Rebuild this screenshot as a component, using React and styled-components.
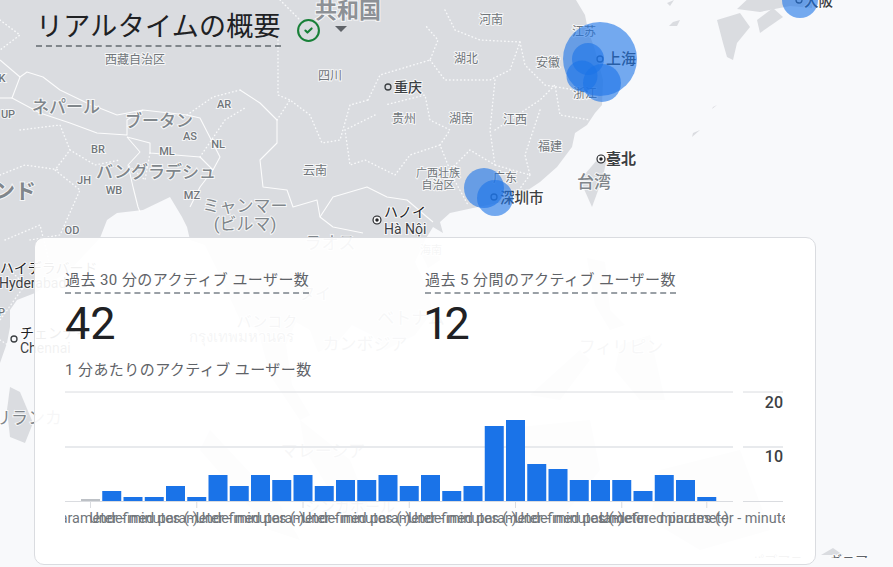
import React from 'react';
import styled, { createGlobalStyle } from 'styled-components';
import { CircleCheck } from 'lucide-react';

const GlobalStyle = createGlobalStyle`
  html, body {
    margin: 0;
    padding: 0;
    background: #f8f9fb;
  }
`;

const FONT = `Roboto, "Noto Sans CJK JP", "Noto Sans", sans-serif`;

const Page = styled.div`
  position: relative;
  width: 893px;
  height: 567px;
  overflow: hidden;
  background: #f8f9fb;
  font-family: ${FONT};
`;

const MapCanvas = styled.svg`
  position: absolute;
  left: 0;
  top: 0;
  font-family: ${FONT};
`;

const Land = styled.path`
  fill: #dadce0;
`;

const Border = styled.path`
  fill: none;
  stroke: #fff;
  stroke-opacity: 0.9;
  stroke-width: 1.1;
  stroke-linejoin: round;
`;

const Province = styled.path`
  fill: none;
  stroke: #f8f9fa;
  stroke-width: 1.4;
  stroke-linecap: round;
  stroke-dasharray: 0.5 3.2;
`;

const Bubble = styled.circle`
  fill: #1a73e8;
  fill-opacity: 0.6;
`;

const Pin = styled.circle`
  fill: ${(p) => (p.$capital ? '#202124' : 'none')};
  stroke: ${(p) => (p.$capital ? '#fff' : '#3c4043')};
  stroke-width: 1.3;
`;

const PinRing = styled.circle`
  fill: none;
  stroke: #202124;
  stroke-width: 1.1;
`;

const Place = styled.text`
  fill: ${(p) => p.$color || '#70757a'};
  font-size: ${(p) => p.$size || 12}px;
  font-weight: ${(p) => p.$weight || 400};
  text-anchor: ${(p) => p.$anchor || 'middle'};
  dominant-baseline: central;
  paint-order: stroke;
  stroke: rgba(255, 255, 255, 0.75);
  stroke-width: 2px;
`;

const Content = styled.div`
  position: relative;
  display: flex;
  flex-direction: column;
  align-items: flex-start;
`;

const TitleRow = styled.div`
  display: flex;
  align-items: center;
  height: 47px;
  margin-left: 36px;
`;

const Title = styled.h1`
  margin: 0;
  padding: 9px 0 0;
  height: 36px;
  box-sizing: content-box;
  font-size: 27px;
  line-height: 36px;
  font-weight: 400;
  letter-spacing: 0.3px;
  color: #202124;
  border-bottom: 2px dashed #80868b;
  white-space: nowrap;
`;

const StatusIcon = styled(CircleCheck)`
  margin-left: 15px;
  margin-top: 13px;
  color: #188038;
`;

const Caret = styled.span`
  width: 0;
  height: 0;
  margin-left: 14px;
  margin-top: 11px;
  border-left: 6px solid transparent;
  border-right: 6px solid transparent;
  border-top: 6px solid #5f6368;
`;

const Card = styled.section`
  box-sizing: border-box;
  width: 782px;
  height: 328px;
  margin: 190px 0 0 34px;
  padding: 32px 0 0 30px;
  background: rgba(255, 255, 255, 0.93);
  border: 1px solid #dadce0;
  border-radius: 10px;
`;

const Metrics = styled.div`
  display: grid;
  grid-template-columns: 360px 360px;
`;

const Metric = styled.div`
  display: flex;
  flex-direction: column;
  align-items: flex-start;
`;

const MetricLabel = styled.span`
  height: 22px;
  font-size: 15px;
  line-height: 20px;
  font-weight: 400;
  letter-spacing: 0.43px;
  color: #5f6368;
  white-space: nowrap;
  border-bottom: 2px dashed #9aa0a6;
`;

const MetricValue = styled.div`
  margin-top: 4px;
  font-size: 45px;
  line-height: 52px;
  font-weight: 400;
  font-feature-settings: 'pnum';
  font-variant-numeric: proportional-nums;
  color: #202124;
`;

const ChartTitle = styled.div`
  margin-top: 10px;
  font-size: 15px;
  line-height: 20px;
  font-weight: 400;
  letter-spacing: 0.43px;
  color: #5f6368;
  white-space: nowrap;
`;

const Chart = styled.svg`
  display: block;
  margin-top: 11px;
  font-family: ${FONT};
`;

const GridLine = styled.line`
  stroke: ${(p) => (p.$soft ? '#e8eaed' : '#dadce0')};
  stroke-width: ${(p) => (p.$soft ? 2 : 1)};
`;

const Bar = styled.rect`
  fill: ${(p) => (p.$muted ? '#bdc1c6' : '#1a73e8')};
`;

const AxisValue = styled.text`
  fill: #3c4043;
  font-size: 16px;
  font-weight: 500;
  text-anchor: end;
`;

const AxisLabel = styled.text`
  fill: #70757a;
  font-size: 14.4px;
  text-anchor: middle;
`;

const LAND = [
  'M-5 -5 L573 -5 L585 15 L588 30 L595 50 L603 80 L602 105 L595 113 L587 125 L575 133 L572 147 L557 167 L540 182 L513 200 L473 208 L450 213 L440 222 L443 233 L433 227 L425 240 L415 262 L428 290 L432 312 L415 335 L385 350 L372 335 L352 325 L335 345 L318 352 L310 330 L296 322 L286 345 L292 385 L310 415 L300 420 L270 375 L258 330 L240 320 L222 280 L205 245 L190 240 L187 227 L182 217 L170 197 L143 210 L117 213 L107 220 L100 238 L70 270 L35 293 L17 300 L10 310 L10 327 L7 343 L0 363 L-5 370 Z',
  'M10 387 L20 392 L33 423 L25 443 L10 437 L7 410 Z',
  'M597 160 L607 157 L603 177 L592 207 L580 180 Z',
  'M717 20 L740 13 L750 27 L737 43 L733 60 L727 57 L723 43 Z',
  'M757 20 L773 8 L783 17 L760 33 Z',
  'M737 9 L752 -5 L812 -5 L812 8 L790 6 L760 12 Z',
  'M673 22 L680 20 L677 26 L669 26 Z',
  'M713 107 L717 105 L712 109 Z',
  'M693 133 L700 130 L692 137 Z',
  'M667 3 L674 0 L670 6 Z',
  'M422 255 L438 248 L440 260 L428 268 Z',
  'M587 258 L605 262 L610 310 L625 325 L610 330 L595 305 Z',
  'M620 345 L650 335 L665 400 L640 400 L615 370 Z',
  'M530 395 L580 350 L590 360 L560 400 Z',
  'M300 420 L350 460 L370 510 L345 515 L305 450 Z',
  'M490 430 L590 420 L600 470 L560 520 L480 510 Z',
  'M210 430 L280 505 L300 540 L270 530 L200 450 Z',
  'M660 470 L740 450 L770 530 L700 550 L650 520 Z',
  'M821 555 L833 548 L843 555 Z',
];

const BORDERS = [
  'M0 60 L20 77 L27 72 L43 77 L60 90 L87 103 L117 115 L143 110 L187 115',
  'M20 77 L12 98 L40 113 L70 123 L97 133 L127 135 L127 120 L143 110',
  'M127 137 L150 143 L150 153 L200 157 L213 170 L200 187 L190 207',
  'M133 187 L138 207 L140 212',
  'M127 137 L140 152 L128 165 L133 187',
  'M187 115 L200 118 L220 157 L213 170',
  'M240 90 L260 103 L277 120 L277 143 L260 160 L263 187 L287 190 L293 207 L317 200 L320 217 L333 227 L363 233',
  'M320 217 L333 197 L367 187 L387 197 L407 200 L427 217 L433 222',
  'M0 98 L12 98',
];

const PROVINCES = [
  'M187 115 L213 97 L240 90',
  'M277 120 L290 100 L310 115 L322 143 L340 140 L350 105 L368 100',
  'M278 40 L278 95 L290 100',
  'M368 100 L380 75 L430 60 L438 40 L425 25',
  'M375 115 L345 130 L350 165 L365 160 L395 175 L410 155 L440 145',
  'M440 145 L450 130 L430 120 L425 95 L385 105',
  'M445 10 L455 30 L480 40 L520 42 L510 70 L490 80 L445 80 L430 60',
  'M520 42 L525 65 L545 85 L575 90',
  'M495 80 L490 130 L495 165 L470 150 L450 170 L440 145',
  'M495 130 L540 100 L555 85 L560 115 L590 120',
  'M540 110 L525 155 L530 175 L495 165',
  'M530 175 L515 195',
  'M430 170 L450 172 L468 205',
  'M20 130 L60 125 L70 150 L55 170 L80 190 L60 235 L30 240',
  'M70 150 L95 165 L120 160',
  'M150 153 L145 180 L128 165',
  'M200 157 L225 120 L245 108',
  'M0 175 L25 165 L60 170',
  'M5 240 L40 225 L50 265',
  'M5 265 L25 285 L0 320',
  'M0 340 L8 345 L4 380',
  'M280 0 L300 20',
  'M0 20 L20 35 L0 50',
];

const PLACES = [
  { t: '共和国', x: 348, y: 10, size: 22, weight: 700, color: '#8d9196' },
  { t: '西藏自治区', x: 135, y: 60 },
  { t: '四川', x: 330, y: 76 },
  { t: '重庆', x: 394, y: 87, size: 14, weight: 500, anchor: 'start', color: '#3c4043' },
  { t: '贵州', x: 404, y: 119 },
  { t: 'ネパール', x: 66, y: 107, size: 17, weight: 500, color: '#80868b' },
  { t: 'ブータン', x: 159, y: 121, size: 17, weight: 500, color: '#80868b' },
  { t: 'バングラデシュ', x: 156, y: 172, size: 17, weight: 500, color: '#80868b' },
  { t: 'インド', x: 36, y: 191, size: 21, weight: 700, anchor: 'end', color: '#80868b' },
  { t: 'ミャンマー', x: 245, y: 206, size: 17, color: '#80868b' },
  { t: '(ビルマ)', x: 245, y: 224, size: 17, color: '#80868b' },
  { t: 'AR', x: 224, y: 104, size: 11, weight: 500 },
  { t: 'UP', x: 8, y: 114, size: 11, weight: 500 },
  { t: 'K', x: 2, y: 78, size: 11, weight: 500 },
  { t: 'AS', x: 190, y: 136, size: 11, weight: 500 },
  { t: 'NL', x: 218, y: 144, size: 11, weight: 500 },
  { t: 'BR', x: 98, y: 149, size: 11, weight: 500 },
  { t: 'ML', x: 167, y: 151, size: 11, weight: 500 },
  { t: 'JH', x: 84, y: 180, size: 11, weight: 500 },
  { t: 'WB', x: 114, y: 190, size: 11, weight: 500 },
  { t: 'MZ', x: 192, y: 195, size: 11, weight: 500 },
  { t: 'OD', x: 72, y: 230, size: 11, weight: 500 },
  { t: '云南', x: 315, y: 171 },
  { t: 'ハノイ', x: 384, y: 212, size: 14, anchor: 'start', color: '#202124' },
  { t: 'Hà Nội', x: 384, y: 229, size: 14, anchor: 'start', color: '#3c4043' },
  { t: 'ラオス', x: 330, y: 243, size: 17, color: '#80868b' },
  { t: '广西壮族', x: 438, y: 173, size: 11 },
  { t: '自治区', x: 438, y: 185, size: 11 },
  { t: '河南', x: 491, y: 20 },
  { t: '湖北', x: 466, y: 59 },
  { t: '安徽', x: 548, y: 63 },
  { t: '江苏', x: 584, y: 32 },
  { t: '上海', x: 606, y: 59, size: 15, weight: 500, anchor: 'start', color: '#3c4043' },
  { t: '浙江', x: 585, y: 94 },
  { t: '湖南', x: 461, y: 119 },
  { t: '江西', x: 515, y: 120 },
  { t: '福建', x: 550, y: 147 },
  { t: '广东', x: 505, y: 178 },
  { t: '深圳市', x: 500, y: 198, size: 14.5, weight: 500, anchor: 'start', color: '#3c4043' },
  { t: '臺北', x: 606, y: 159, size: 15, weight: 700, anchor: 'start', color: '#3c4043' },
  { t: '台湾', x: 594, y: 182, size: 17, weight: 500, color: '#80868b' },
  { t: '大阪', x: 804, y: 1, size: 14.5, weight: 500, anchor: 'start', color: '#3c4043' },
  { t: 'ハイデラバード', x: 0, y: 268, size: 14, anchor: 'start', color: '#202124' },
  { t: 'Hyderabad', x: -1, y: 283, size: 14, anchor: 'start', color: '#3c4043' },
  { t: 'AP', x: 5, y: 312, size: 11, weight: 500, anchor: 'end' },
  { t: 'チェンナイ', x: 20, y: 333, size: 14, anchor: 'start', color: '#202124' },
  { t: 'Chennai', x: 20, y: 348, size: 14, anchor: 'start', color: '#3c4043' },
  { t: 'スリランカ', x: 62, y: 418, size: 17, anchor: 'end', color: '#80868b' },
  { t: 'バンコク', x: 267, y: 322, size: 15, color: '#70757a' },
  { t: 'กรุงเทพมหานคร', x: 241, y: 337, size: 15, color: '#70757a' },
  { t: 'タイ', x: 315, y: 293, size: 16, color: '#80868b' },
  { t: 'ベトナム', x: 411, y: 318, size: 17, color: '#80868b' },
  { t: 'カンボジア', x: 365, y: 344, size: 17, color: '#80868b' },
  { t: 'フィリピン', x: 621, y: 347, size: 17, color: '#80868b' },
  { t: 'マレーシア', x: 323, y: 451, size: 17, color: '#80868b' },
  { t: 'シンガポール', x: 350, y: 507, size: 15, color: '#80868b' },
  { t: '海南', x: 431, y: 250, size: 11 },
  { t: 'パプアニューギニア', x: 868, y: 560, size: 13, anchor: 'end', color: '#5f6368' },
];

const BUBBLES = [
  [600, 59, 37],
  [588, 59, 16],
  [582, 76, 15.5],
  [602, 83, 19],
  [484, 188, 20],
  [495, 198, 18],
  [800, 0, 18],
];

const PINS = [
  [388, 87],
  [600, 59],
  [494, 197],
  [799, 0],
  [14, 339],
];

const CAPITALS = [
  [377, 220],
  [601, 159],
];

const USERS_PER_MINUTE = [
  2, 10, 4, 4, 15, 4, 26, 15, 26, 21, 26, 15, 21, 21, 26, 15, 26, 10, 15, 75, 81, 37, 32, 21, 21, 21,
  10, 26, 21, 4,
];

const TICKS = [0, 5, 10, 15, 20, 25, 29];
const BAR_START = 16;
const BAR_STEP = 21.25;
const BAR_WIDTH = 19;
const BASELINE = 110;

const tickX = (i) => BAR_START + i * BAR_STEP + BAR_WIDTH / 2;

function WorldMap() {
  return (
    <MapCanvas width="893" height="558" viewBox="0 0 893 558">
      {LAND.map((d) => (
        <Land key={d} d={d} />
      ))}
      {PROVINCES.map((d) => (
        <Province key={d} d={d} />
      ))}
      {BORDERS.map((d) => (
        <Border key={d} d={d} />
      ))}
      {PLACES.map((p) => (
        <Place
          key={p.t}
          x={p.x}
          y={p.y}
          $size={p.size}
          $weight={p.weight}
          $color={p.color}
          $anchor={p.anchor}
        >
          {p.t}
        </Place>
      ))}
      {PINS.map(([x, y]) => (
        <Pin key={x} cx={x} cy={y} r="3" />
      ))}
      {CAPITALS.map(([x, y]) => (
        <g key={x}>
          <PinRing cx={x} cy={y} r="4" />
          <Pin $capital cx={x} cy={y} r="2.4" />
        </g>
      ))}
      {BUBBLES.map(([x, y, r]) => (
        <Bubble key={`${x}-${y}`} cx={x} cy={y} r={r} />
      ))}
    </MapCanvas>
  );
}

function UsersChart() {
  return (
    <Chart width="720" height="140" viewBox="0 0 720 140">
      <GridLine x1="0" x2="668" y1="1" y2="1" />
      <GridLine x1="678" x2="718" y1="1" y2="1" />
      <GridLine $soft x1="0" x2="668" y1="56" y2="56" />
      <GridLine $soft x1="678" x2="718" y1="56" y2="56" />
      <GridLine x1="0" x2="668" y1={BASELINE + 0.5} y2={BASELINE + 0.5} />
      <GridLine x1="678" x2="718" y1={BASELINE + 0.5} y2={BASELINE + 0.5} />
      {USERS_PER_MINUTE.map((h, i) => (
        <Bar
          key={i}
          $muted={i === 0}
          x={BAR_START + i * BAR_STEP}
          y={BASELINE - h}
          width={BAR_WIDTH}
          height={h}
        />
      ))}
      {TICKS.map((i) => (
        <g key={i}>
          <GridLine x1={tickX(i)} x2={tickX(i)} y1={BASELINE} y2={BASELINE + 7} />
          <AxisLabel x={tickX(i)} y={BASELINE + 22}>
            Undefined parameter - minutes (-)
          </AxisLabel>
        </g>
      ))}
      <AxisValue x="718" y="17">
        20
      </AxisValue>
      <AxisValue x="718" y="71">
        10
      </AxisValue>
    </Chart>
  );
}

export default function App() {
  return (
    <Page>
      <GlobalStyle />
      <WorldMap />
      <Content>
        <TitleRow>
          <Title>リアルタイムの概要</Title>
          <StatusIcon size={25} strokeWidth={2} />
          <Caret />
        </TitleRow>
        <Card>
          <Metrics>
            <Metric>
              <MetricLabel>過去 30 分のアクティブ ユーザー数</MetricLabel>
              <MetricValue>42</MetricValue>
            </Metric>
            <Metric>
              <MetricLabel>過去 5 分間のアクティブ ユーザー数</MetricLabel>
              <MetricValue>12</MetricValue>
            </Metric>
          </Metrics>
          <ChartTitle>1 分あたりのアクティブ ユーザー数</ChartTitle>
          <UsersChart />
        </Card>
      </Content>
    </Page>
  );
}
